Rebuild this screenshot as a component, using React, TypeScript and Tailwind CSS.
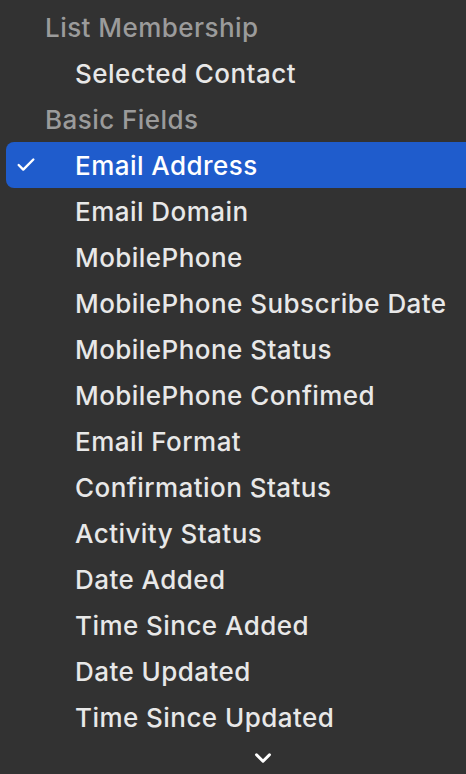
import { Check, ChevronDown } from "lucide-react";

const items = [
  { label: "List Membership", header: true },
  { label: "Selected Contact" },
  { label: "Basic Fields", header: true },
  { label: "Email Address", selected: true },
  { label: "Email Domain" },
  { label: "MobilePhone" },
  { label: "MobilePhone Subscribe Date" },
  { label: "MobilePhone Status" },
  { label: "MobilePhone Confimed" },
  { label: "Email Format" },
  { label: "Confirmation Status" },
  { label: "Activity Status" },
  { label: "Date Added" },
  { label: "Time Since Added" },
  { label: "Date Updated" },
  { label: "Time Since Updated" },
];

export default function App() {
  return (
    <div
      className="w-[466px] h-[774px] bg-[#323232] overflow-hidden pt-[4px]"
      style={{ fontFamily: "Inter, 'Noto Sans', sans-serif" }}
    >
      {items.map((item) =>
        item.header ? (
          <div key={item.label} className="h-[46px] flex items-center pl-[45px] text-[26px] font-medium text-[#9b9b9b] tracking-[0.45px]">
            {item.label}
          </div>
        ) : (
          <div
            key={item.label}
            className={`h-[46px] flex items-center relative ml-[6px] pl-[69px] rounded-l-[8px] text-[26px] font-medium tracking-[0.45px] ${
              item.selected ? "bg-[#1f5ccc] text-white" : "text-[#e8e8e8]"
            }`}
          >
            {item.selected && (
              <Check size={22} strokeWidth={2.6} className="absolute left-[9px] top-[12px] text-white" />
            )}
            {item.label}
          </div>
        )
      )}
      <div className="flex justify-center pt-[5px]">
        <ChevronDown size={26} strokeWidth={2.8} className="text-white ml-[60px]" />
      </div>
    </div>
  );
}
